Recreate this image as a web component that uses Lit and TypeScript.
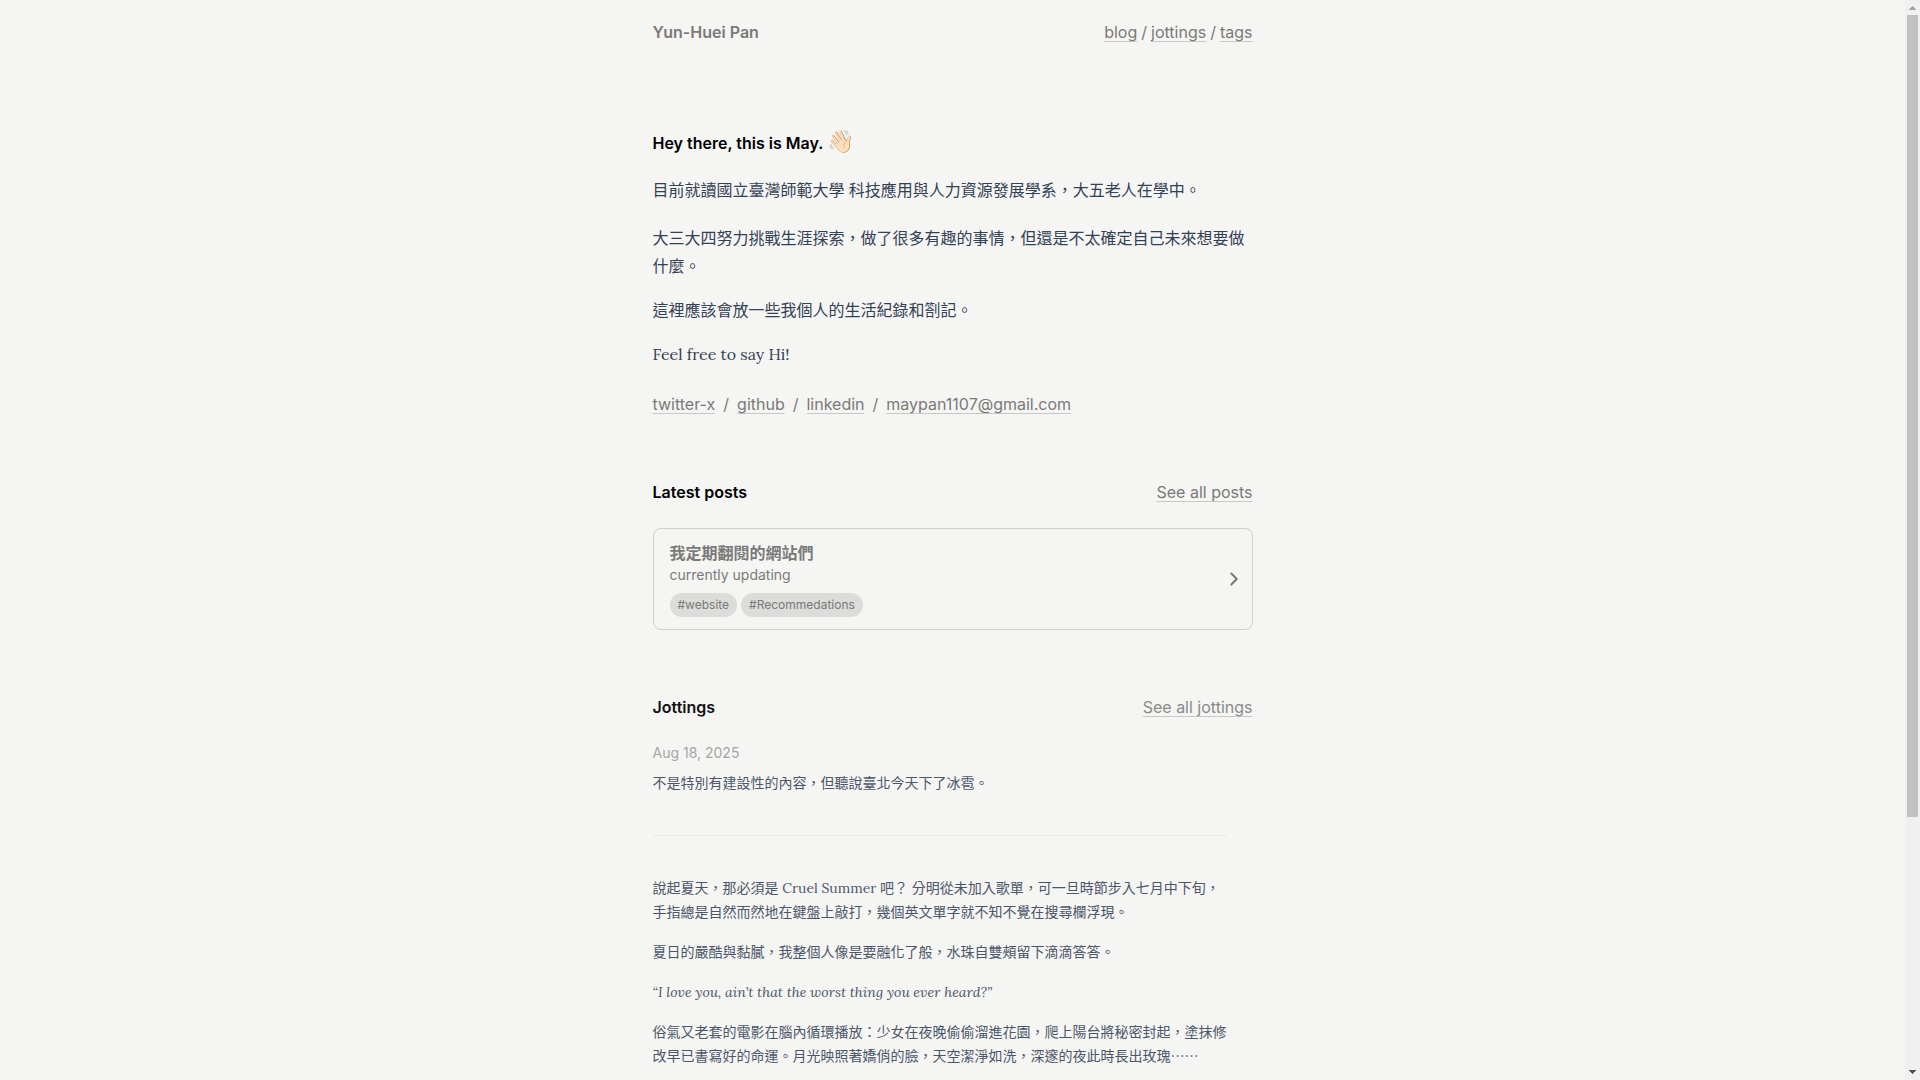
import { LitElement, html, css } from "lit";
import { customElement } from "lit/decorators.js";

@customElement("page-scrollbar")
class PageScrollbar extends LitElement {
  static styles = css`
    :host {
      position: sticky;
      top: 0;
      display: flex;
      flex-direction: column;
      align-items: center;
      flex: none;
      width: 15px;
      height: 100vh;
      background: #f0f0f0;
    }
    .arrow {
      display: block;
      width: 15px;
      height: 15px;
      flex: none;
    }
    .track {
      flex: 1;
      width: 11px;
    }
    .thumb {
      height: 76.4%;
      background: #c1c1c1;
    }
  `;
  render() {
    return html`
      <svg class="arrow" viewBox="0 0 15 15" shape-rendering="crispEdges" aria-hidden="true">
        <path fill="#a3a3a3" d="M7 6h1v1h1v1h1v1h1v1H4V9h1V8h1V7h1z" />
      </svg>
      <div class="track"><div class="thumb"></div></div>
      <svg class="arrow" viewBox="0 0 15 15" shape-rendering="crispEdges" aria-hidden="true">
        <path fill="#505050" d="M4 5h7v1h-1v1H9v1H8v1H7V8H6V7H5V6H4z" />
      </svg>
    `;
  }
}

@customElement("app-root")
class AppRoot extends LitElement {
  static styles = css`
    :host {
      display: flex;
      align-items: flex-start;
      min-height: 100vh;
      background: #f5f5f3;
      color: #7a7a79;
      font: 16px/24px Inter, "Noto Sans CJK TC", sans-serif;
    }
    * {
      box-sizing: border-box;
    }
    .page {
      flex: 1;
      min-width: 0;
    }
    .column {
      max-width: 640px;
      margin: 0 auto;
      padding: 0 20px;
    }
    h1, h2, h3, p {
      margin: 0;
      font-size: inherit;
    }
    .row {
      display: flex;
      justify-content: space-between;
      align-items: center;
    }
    .top {
      padding: 20px 0;
    }
    .nav {
      display: flex;
      gap: 4px;
    }
    .home {
      color: inherit;
      font-weight: 600;
      text-decoration: none;
    }
    .link {
      color: inherit;
      text-decoration: underline 1px #c8c8c7;
      text-underline-offset: 3px;
    }
    .heading {
      color: #000;
      font-weight: 600;
    }
    .intro {
      padding-top: 65px;
    }
    .hello {
      line-height: 28px;
    }
    .wave {
      font-size: 22px;
      font-weight: 400;
      line-height: 20px;
    }
    .bio, .entry {
      display: flex;
      flex-direction: column;
      gap: 16px;
      font-family: Lora, "Noto Sans CJK TC", "Liberation Serif", serif;
    }
    .bio {
      margin-top: 19px;
      color: #334155;
      line-height: 28px;
    }
    .first {
      margin-bottom: 4px;
    }
    .contacts {
      display: flex;
      gap: 8px;
      margin: 24px 0 0;
      padding: 0;
      list-style: none;
    }
    .contacts li {
      display: flex;
      gap: 8px;
    }
    .posts {
      margin-top: 64px;
    }
    .card {
      display: flex;
      justify-content: space-between;
      align-items: center;
      margin-top: 24px;
      padding: 12px 12px 12px 16px;
      border: 1px solid #d0d0cf;
      border-radius: 8px;
      color: inherit;
      text-decoration: none;
    }
    .title {
      font-weight: 600;
    }
    .summary {
      font-size: 14px;
      line-height: 20px;
    }
    .tags {
      display: flex;
      gap: 4px;
      margin-top: 8px;
    }
    .tag {
      padding: 4px 8px;
      border-radius: 12px;
      background: #dcdcda;
      font-size: 12px;
      line-height: 16px;
    }
    .chevron {
      width: 12px;
      height: 16px;
      flex: none;
    }
    .jottings {
      margin-top: 65px;
    }
    .jottings .heading {
      color: #111;
    }
    .jottings .link {
      color: #8a8a89;
    }
    .feed {
      margin-top: 24px;
      padding-right: 26px;
      font-size: 14px;
    }
    .date {
      display: block;
      line-height: 20px;
      color: #a6a6a5;
      margin-top: 4px;
    }
    .entry {
      color: #4b5768;
    }
    .short {
      margin-top: 8px;
    }
    .rule {
      margin: 40px 0;
      border: 0;
      border-top: 1px solid #e9e9e8;
    }
    em {
      font-style: italic;
    }
  `;

  render() {
    return html`
      <div class="page">
        <div class="column">
          <header class="row top">
            <a class="home" href="#home">Yun-Huei Pan</a>
            <nav class="nav">
              <a class="link" href="#blog">blog</a>
              <span>/</span>
              <a class="link" href="#jottings">jottings</a>
              <span>/</span>
              <a class="link" href="#tags">tags</a>
            </nav>
          </header>
          <main>
            <section class="intro">
              <h1 class="heading hello">Hey there, this is May. <span class="wave">👋🏻</span></h1>
              <div class="bio">
                <p class="first">目前就讀國立臺灣師範大學 科技應用與人力資源發展學系，大五老人在學中。</p>
                <p>大三大四努力挑戰生涯探索，做了很多有趣的事情，但還是不太確定自己未來想要做什麼。</p>
                <p>這裡應該會放一些我個人的生活紀錄和劄記。</p>
                <p>Feel free to say Hi!</p>
              </div>
              <ul class="contacts">
                <li><a class="link" href="#twitter">twitter-x</a><span>/</span></li>
                <li><a class="link" href="#github">github</a><span>/</span></li>
                <li><a class="link" href="#linkedin">linkedin</a><span>/</span></li>
                <li><a class="link" href="mailto:maypan1107@gmail.com">maypan1107@gmail.com</a></li>
              </ul>
            </section>
            <section class="posts">
              <div class="row">
                <h2 class="heading">Latest posts</h2>
                <a class="link" href="#posts">See all posts</a>
              </div>
              <a class="card" href="#post">
                <div>
                  <h3 class="title">我定期翻閱的網站們</h3>
                  <p class="summary">currently updating</p>
                  <div class="tags">
                    <span class="tag">#website</span>
                    <span class="tag">#Recommedations</span>
                  </div>
                </div>
                <svg class="chevron" viewBox="0 0 12 16" fill="none" stroke="#747473" stroke-width="1.8" stroke-linecap="round" stroke-linejoin="round" aria-hidden="true">
                  <path d="M3.3 2.5l5.5 5.5-5.5 5.5" />
                </svg>
              </a>
            </section>
            <section class="jottings">
              <div class="row">
                <h2 class="heading">Jottings</h2>
                <a class="link" href="#jottings">See all jottings</a>
              </div>
              <div class="feed">
                <time class="date" datetime="2025-08-18">Aug 18, 2025</time>
                <div class="entry short">
                  <p>不是特別有建設性的內容，但聽說臺北今天下了冰雹。</p>
                </div>
                <hr class="rule" />
                <div class="entry">
                  <p>說起夏天，那必須是 Cruel Summer 吧？ 分明從未加入歌單，可一旦時節步入七月中下旬，手指總是自然而然地在鍵盤上敲打，幾個英文單字就不知不覺在搜尋欄浮現。</p>
                  <p>夏日的嚴酷與黏膩，我整個人像是要融化了般，水珠自雙頰留下滴滴答答。</p>
                  <p><em>“I love you, ain’t that the worst thing you ever heard?”</em></p>
                  <p>俗氣又老套的電影在腦內循環播放：少女在夜晚偷偷溜進花園，爬上陽台將秘密封起，塗抹修改早已書寫好的命運。月光映照著嬌俏的臉，天空潔淨如洗，深邃的夜此時長出玫瑰⋯⋯</p>
                </div>
              </div>
            </section>
          </main>
        </div>
      </div>
      <page-scrollbar></page-scrollbar>
    `;
  }
}
